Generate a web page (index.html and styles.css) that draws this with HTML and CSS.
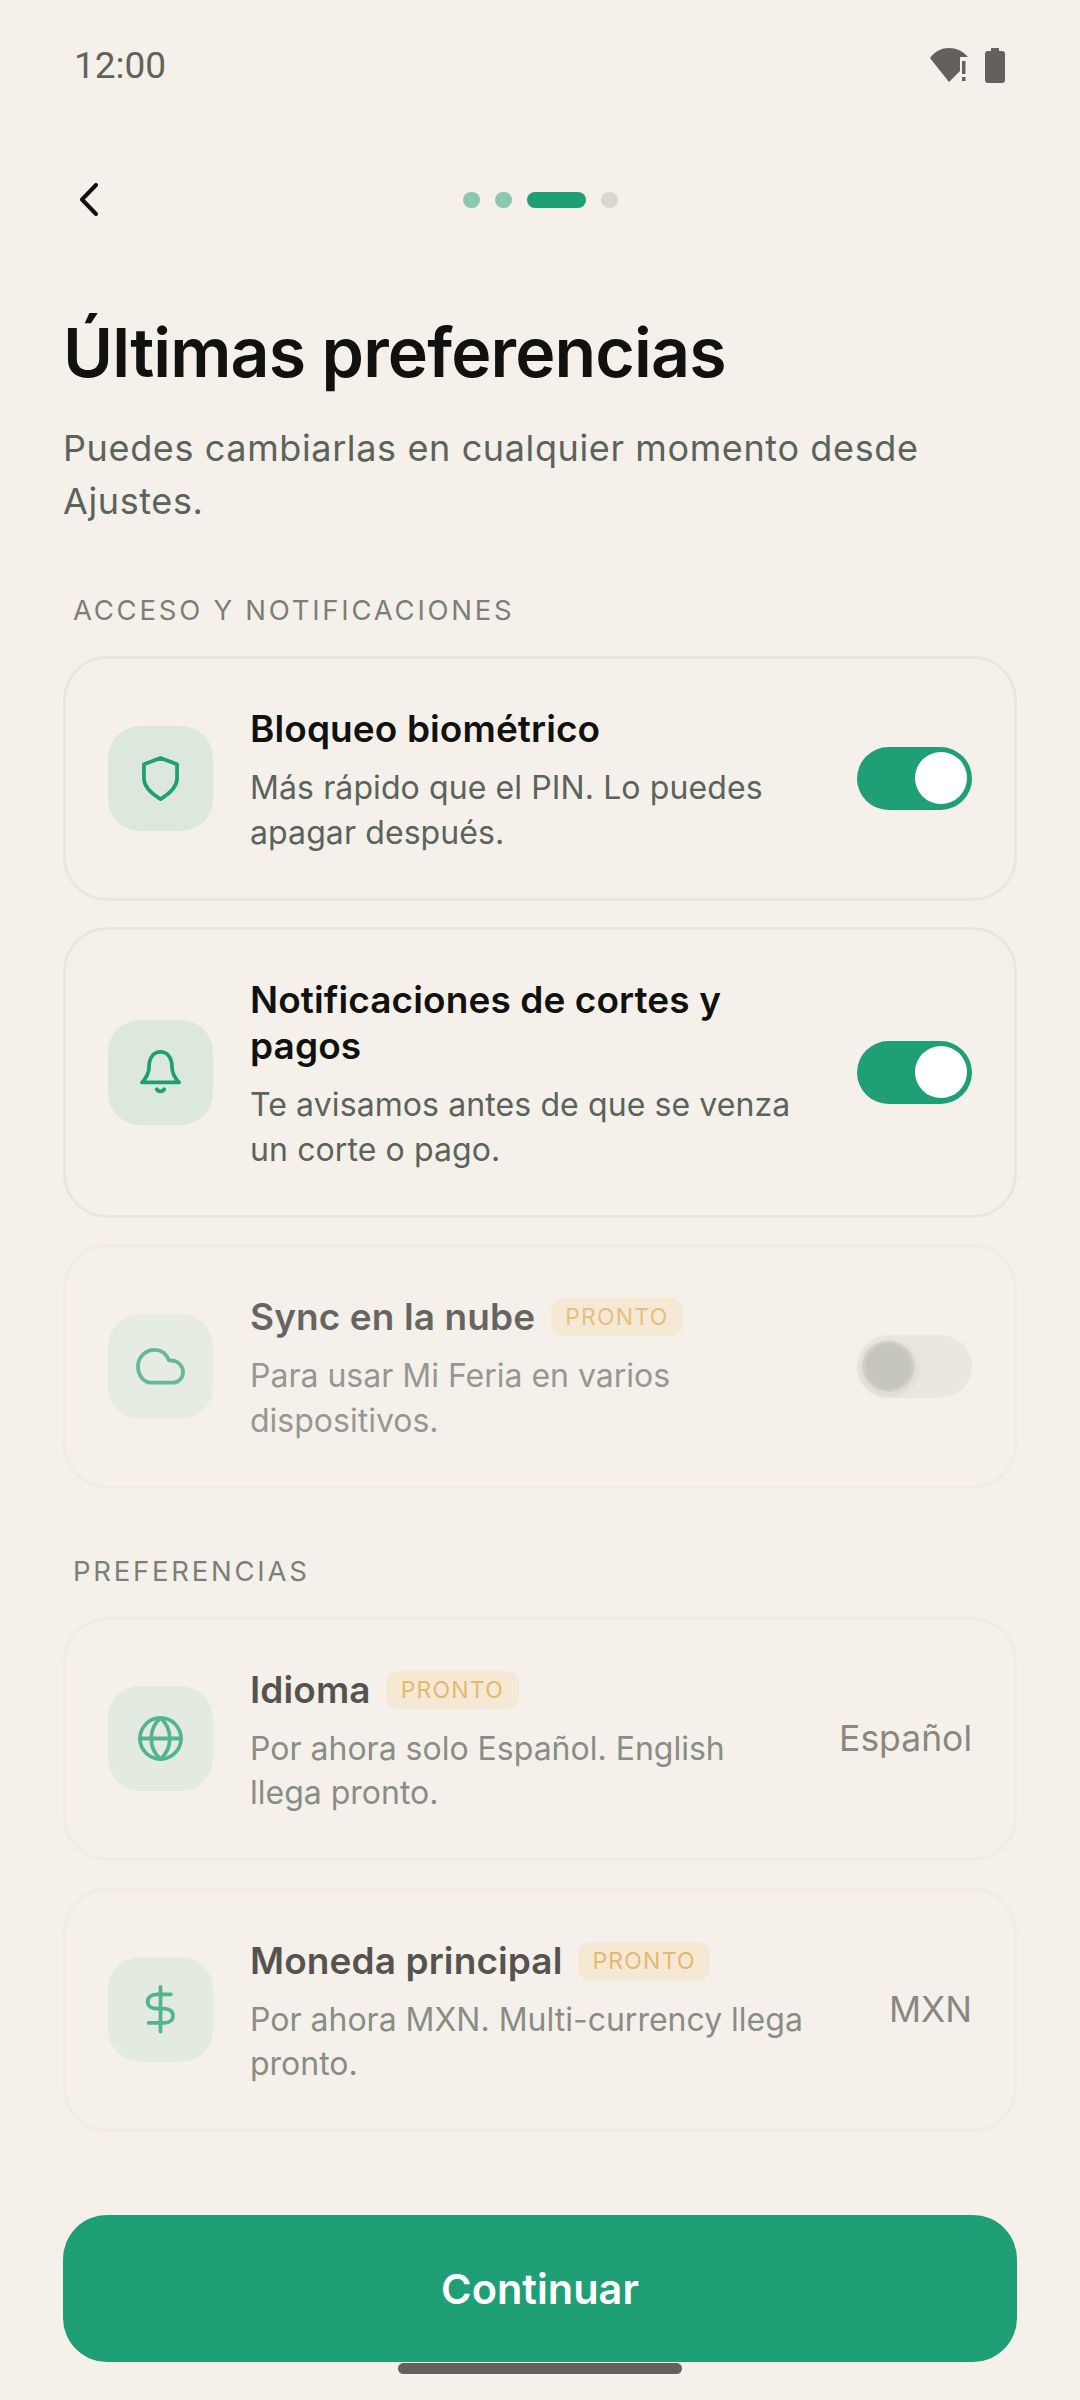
FILE: index.html
```html
<!DOCTYPE html>
<html lang="es">
<head>
  <meta charset="UTF-8">
  <meta name="viewport" content="width=device-width, initial-scale=1.0">
  <title>Últimas preferencias</title>
  <link rel="stylesheet" href="styles.css">
</head>
<body>

<div class="screen">
  <!-- Status bar -->
  <div class="status-bar">
    <span class="clock">12:00</span>
    <div class="status-icons">
      <svg class="wifi" viewBox="0 0 38 34" aria-hidden="true">
        <path d="M0 10 C5 3 12 0 19 0 C26 0 33 3 38 9 L30 9 V23 L19 34 Z"/>
        <rect x="32" y="13" width="3.5" height="13"/>
        <rect x="32" y="29" width="3.5" height="4"/>
      </svg>
      <svg class="battery" viewBox="0 0 20 35" aria-hidden="true">
        <path d="M6 0 H14 V3 H17 Q20 3 20 6 V32 Q20 35 17 35 H3 Q0 35 0 32 V6 Q0 3 3 3 H6 Z"/>
      </svg>
    </div>
  </div>

  <!-- Back button and step dots -->
  <div class="top-nav">
    <svg class="back" viewBox="0 0 19 33" aria-hidden="true">
      <path d="M17 2 L3 16.5 L17 31"/>
    </svg>
    <div class="steps">
      <span class="dot done"></span>
      <span class="dot done"></span>
      <span class="dot current"></span>
      <span class="dot"></span>
    </div>
  </div>

  <h1 class="page-title">Últimas preferencias</h1>
  <p class="page-sub">Puedes cambiarlas en cualquier momento desde Ajustes.</p>

  <div class="section-label">ACCESO Y NOTIFICACIONES</div>
  <div class="card-list">
    <div class="card">
      <div class="tile">
        <svg viewBox="0 0 24 24" aria-hidden="true"><path d="M12 2.7 L19.5 5.6 V12 C19.5 15.6 16.5 18.6 12 21.3 C7.5 18.6 4.5 15.6 4.5 12 V5.6 Z"/></svg>
      </div>
      <div class="card-text">
        <div class="card-title">Bloqueo biométrico</div>
        <div class="card-sub">Más rápido que el PIN. Lo puedes apagar después.</div>
      </div>
      <div class="toggle on"><span class="thumb"></span></div>
    </div>

    <div class="card">
      <div class="tile">
        <svg viewBox="0 0 24 24" aria-hidden="true"><path d="M3.6 16.5 H20.4 C18.2 14.2 17.2 12.5 17.2 9.5 C17.2 5.2 15 2.7 12 2.7 C9 2.7 6.8 5.2 6.8 9.5 C6.8 12.5 5.8 14.2 3.6 16.5 Z"/><path d="M10.3 19.6 C11 20.8 13 20.8 13.7 19.6"/></svg>
      </div>
      <div class="card-text">
        <div class="card-title">Notificaciones de cortes y pagos</div>
        <div class="card-sub">Te avisamos antes de que se venza un corte o pago.</div>
      </div>
      <div class="toggle on"><span class="thumb"></span></div>
    </div>

    <div class="card soon faint">
      <div class="tile">
        <svg viewBox="0 0 24 24" aria-hidden="true"><path d="M7.5 19.3 H17.6 C20.2 19.3 22.2 17.2 22.2 14.6 C22.2 12 20.2 9.6 17.6 9.3 L15.8 9.2 C14.6 6.2 12.2 4.5 9.3 4.5 C5.2 4.5 1.8 7.8 1.8 11.9 C1.8 16 4.5 19.3 7.5 19.3 Z"/></svg>
      </div>
      <div class="card-text">
        <div class="card-title">Sync en la nube <span class="badge">PRONTO</span></div>
        <div class="card-sub">Para usar Mi Feria en varios dispositivos.</div>
      </div>
      <div class="toggle"><span class="thumb"></span></div>
    </div>
  </div>

  <div class="section-label">PREFERENCIAS</div>
  <div class="card-list">
    <div class="card soon">
      <div class="tile">
        <svg viewBox="0 0 24 24" aria-hidden="true"><circle cx="12" cy="12" r="9.3"/><path d="M2.7 12 H21.3"/><path d="M12 2.7 C14.8 5.2 16.2 8.4 16.2 12 C16.2 15.6 14.8 18.8 12 21.3 C9.2 18.8 7.8 15.6 7.8 12 C7.8 8.4 9.2 5.2 12 2.7 Z"/></svg>
      </div>
      <div class="card-text">
        <div class="card-title">Idioma <span class="badge">PRONTO</span></div>
        <div class="card-sub">Por ahora solo Español. English llega pronto.</div>
      </div>
      <div class="card-value">Español</div>
    </div>

    <div class="card soon">
      <div class="tile">
        <svg viewBox="0 0 24 24" aria-hidden="true"><path d="M12 1.7 V22"/><path d="M16.7 5.1 H10.2 C7.9 5.1 6.2 6.6 6.2 8.4 C6.2 10.3 7.9 11.6 10.2 11.6 H13.8 C16.1 11.6 17.7 13 17.7 14.9 C17.7 16.7 16.1 18.1 13.8 18.1 H6.6"/></svg>
      </div>
      <div class="card-text">
        <div class="card-title">Moneda principal <span class="badge">PRONTO</span></div>
        <div class="card-sub">Por ahora MXN. Multi-currency llega pronto.</div>
      </div>
      <div class="card-value">MXN</div>
    </div>
  </div>

  <button class="continue">Continuar</button>
  <div class="home-bar"></div>
</div>

</body>
</html>
```

FILE: styles.css
```css
* {
  box-sizing: border-box;
}

body {
  margin: 0;
  background-color: #f5f1ea;
  font-family: Inter, "Noto Sans", sans-serif;
  color: #111110;
}

.screen {
  width: 1080px;
  height: 2400px;
  padding: 0 63px;
  display: flex;
  flex-direction: column;
  overflow: hidden;
}

/* Status bar */
.status-bar {
  height: 166px;
  padding: 46px 11px 0;
  display: flex;
  justify-content: space-between;
  align-items: flex-start;
}

.clock {
  font-family: Roboto, sans-serif;
  font-size: 37px;
  line-height: 40px;
  color: #62615c;
}

.status-icons {
  display: flex;
  gap: 17px;
  padding: 2px 1px 0 0;
}

.wifi {
  width: 38px;
  height: 34px;
  fill: #62615c;
}

.battery {
  width: 20px;
  height: 35px;
  fill: #62615c;
}

/* Top navigation */
.top-nav {
  height: 66px;
  display: flex;
  align-items: center;
  position: relative;
}

.back {
  width: 19px;
  height: 33px;
  margin-left: 16px;
  fill: none;
  stroke: #111110;
  stroke-width: 4;
  stroke-linecap: round;
  stroke-linejoin: round;
}

.steps {
  position: absolute;
  left: 400px;
  top: 26px;
  display: flex;
  gap: 15px;
}

.dot {
  width: 17px;
  height: 16px;
  border-radius: 8px;
  background-color: #d8d6ce;
}

.dot.done {
  background-color: #8cc8ae;
}

.dot.current {
  width: 59px;
  background-color: #1e9f75;
}

/* Heading */
.page-title {
  margin: 76px 0 0;
  font-size: 68px;
  line-height: 88px;
  font-weight: 600;
  letter-spacing: -0.85px;
  color: #111110;
}

.page-sub {
  margin: 26px 0 0;
  font-size: 36px;
  line-height: 53px;
  letter-spacing: 0.62px;
  color: #5a635c;
}

.section-label {
  margin: 64px 0 0 10px;
  font-size: 27.5px;
  line-height: 36px;
  letter-spacing: 2.75px;
  color: #7a8078;
}

/* Cards */
.card-list {
  margin-top: 28px;
  display: flex;
  flex-direction: column;
  gap: 26.5px;
}

.card {
  padding: 42.25px 42px;
  display: flex;
  align-items: center;
  gap: 37px;
  border: 3px solid #e6e8df;
  border-radius: 44px;
}

.tile {
  width: 105px;
  height: 105px;
  flex: none;
  display: flex;
  justify-content: center;
  align-items: center;
  border-radius: 32px;
  background-color: #dde8dd;
}

.tile svg {
  width: 53px;
  height: 53px;
  fill: none;
  stroke: #1e9f75;
  stroke-width: 1.7;
  stroke-linecap: round;
  stroke-linejoin: round;
}

.card-text {
  flex: 1;
  min-width: 0;
  padding-top: 5px;
}

.card-title {
  font-size: 37px;
  line-height: 46px;
  font-weight: 600;
  letter-spacing: 0.1px;
  color: #111110;
}

.card-sub {
  margin-top: 14px;
  font-size: 32px;
  line-height: 44.5px;
  letter-spacing: 0.1px;
  color: #5a635c;
}

.badge {
  display: inline-block;
  margin-left: 6px;
  padding: 0 14.5px;
  font-size: 23px;
  line-height: 38px;
  font-weight: 400;
  letter-spacing: 1.2px;
  vertical-align: 5px;
  border-radius: 12px;
  background-color: #f5e5cb;
  color: #dfa13e;
}

.card-value {
  flex: none;
  font-size: 35.5px;
  color: #5b5b56;
}

/* Coming-soon rows are dimmed */
.soon {
  border-color: #ebeee4;
}

.soon .card-text,
.soon .card-value {
  opacity: 0.7;
}

.soon .tile svg {
  opacity: 0.72;
}

.soon .tile {
  background-color: #e3ebe0;
}

.soon .card-sub {
  letter-spacing: 0;
}

.faint .card-text {
  opacity: 0.62;
}

.faint .tile {
  background-color: #e6ece1;
}

.faint .tile svg {
  opacity: 0.65;
}

/* Toggles */
.toggle {
  width: 115px;
  height: 63px;
  flex: none;
  padding: 5px;
  display: flex;
  align-items: center;
  border-radius: 32px;
  background-color: #eae7e0;
}

.toggle.on {
  justify-content: flex-end;
  background-color: #1e9f75;
}

.thumb {
  width: 52px;
  height: 52px;
  border-radius: 50%;
  background-color: #ffffff;
}

/* Disabled knob: soft grey core inside a faint ring */
.toggle:not(.on) {
  padding: 4px;
}

.toggle:not(.on) .thumb {
  width: 55px;
  height: 53px;
  border: 1px solid #e2e0d9;
  background: radial-gradient(circle, #c6c5be 58%, rgba(198, 197, 190, 0) 92%);
  box-shadow: 0 2px 6px rgba(120, 120, 110, 0.18);
}

/* Footer button */
.continue {
  margin-top: auto;
  height: 147px;
  flex: none;
  border: none;
  border-radius: 44px;
  font-family: inherit;
  font-size: 41.5px;
  font-weight: 600;
  color: #ffffff;
  background-color: #1e9f75;
}

.home-bar {
  width: 284px;
  height: 11px;
  margin: 1px auto 26px;
  flex: none;
  border-radius: 6px;
  background-color: #62615c;
}
```
